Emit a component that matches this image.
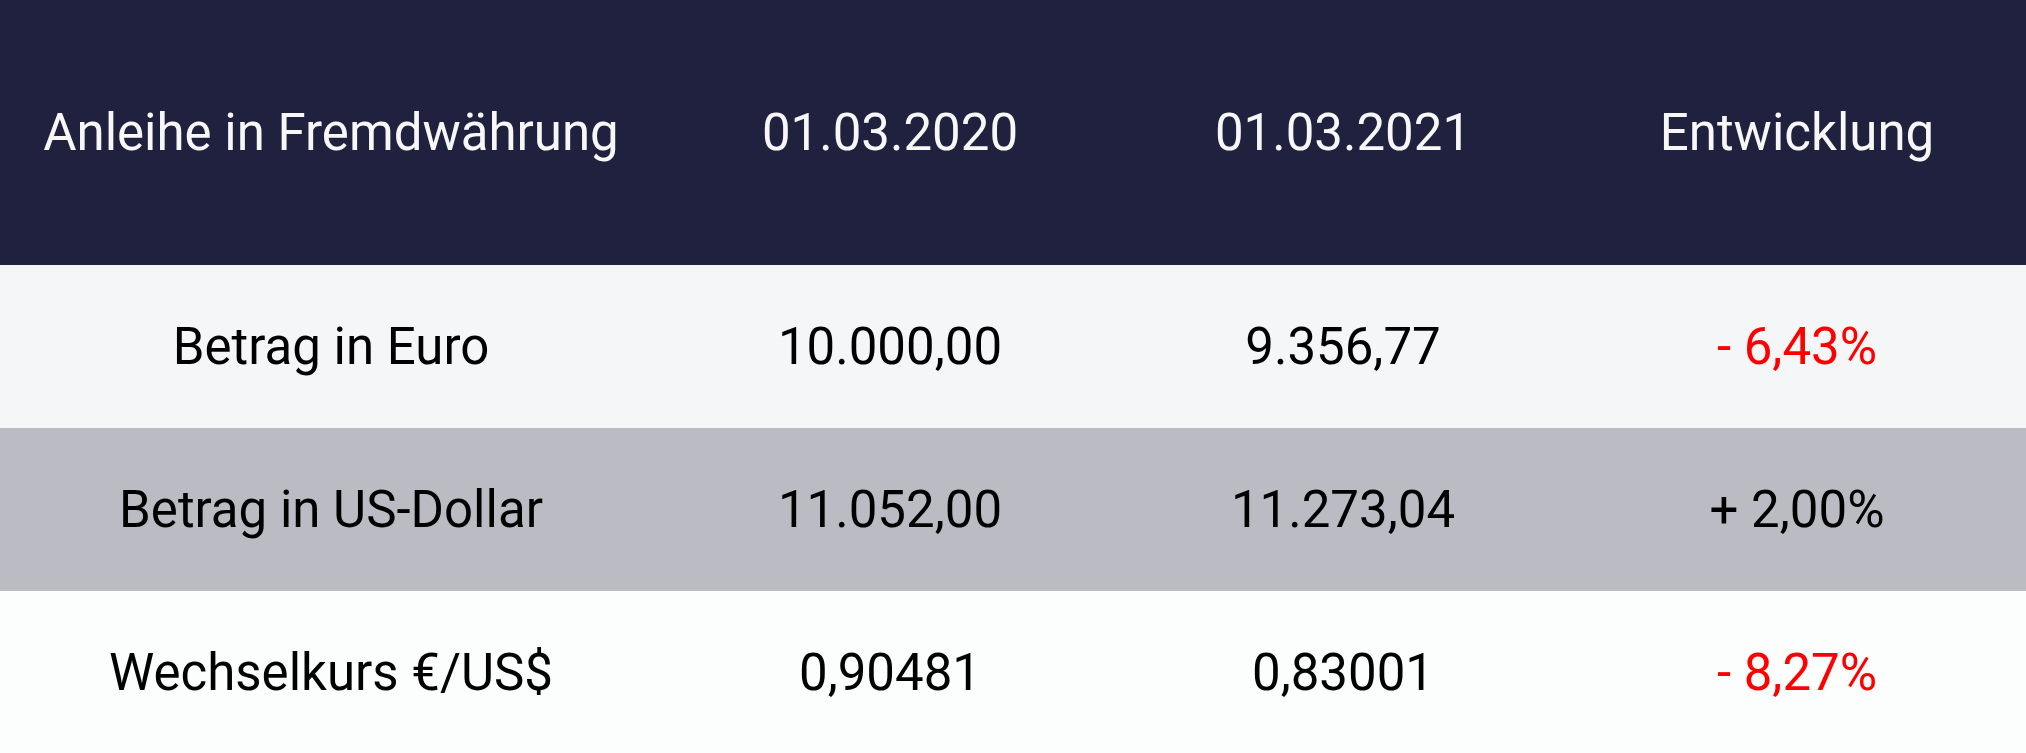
const rows = [
  { label: 'Betrag in Euro', a: '10.000,00', b: '9.356,77', d: '- 6,43%', neg: true, bg: 'bg-[#f5f6f8]' },
  { label: 'Betrag in US-Dollar', a: '11.052,00', b: '11.273,04', d: '+ 2,00%', neg: false, bg: 'bg-[#bbbbc3]' },
  { label: 'Wechselkurs €/US$', a: '0,90481', b: '0,83001', d: '- 8,27%', neg: true, bg: 'bg-[#fcfdfd]' },
];

const cols = 'grid grid-cols-[662px_456px_450px_1fr] items-center text-center';

export default function App() {
  return (
    <div className="w-[2026px] h-[753px] font-['Roboto',sans-serif] text-[51px] leading-none">
      {/* Header */}
      <div className={`${cols} h-[265px] bg-[#20203f] text-[#f7f7f7]`}>
        <div>Anleihe in Fremdwährung</div>
        <div>01.03.2020</div>
        <div>01.03.2021</div>
        <div>Entwicklung</div>
      </div>

      {rows.map((r) => (
        <div key={r.label} className={`${cols} h-[163px] ${r.bg} text-black`}>
          <div>{r.label}</div>
          <div>{r.a}</div>
          <div>{r.b}</div>
          <div className={r.neg ? 'text-[#ff0000]' : 'text-black'}>{r.d}</div>
        </div>
      ))}
    </div>
  );
}
